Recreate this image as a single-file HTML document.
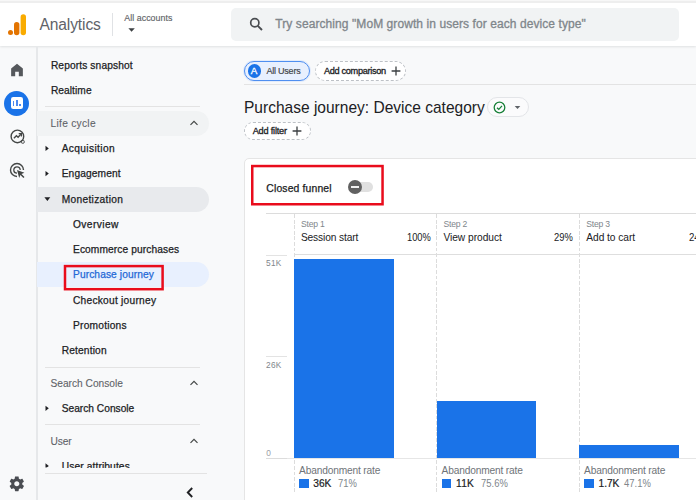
<!DOCTYPE html>
<html lang="en">
<head>
<meta charset="utf-8">
<title>Analytics</title>
<style>
*{box-sizing:border-box;margin:0;padding:0}
html,body{width:696px;height:500px;overflow:hidden;background:#f8f9fa;font-family:"Liberation Sans",sans-serif;color:#202124}
.abs{position:absolute}
.t{position:absolute;white-space:nowrap;line-height:1;transform:translateY(-50%)}
#hdr{left:0;top:0;width:696px;height:46px;background:linear-gradient(#f7f7f7 0,#f7f7f7 1px,#eeeeee 1px,#eeeeee 2.6px,#fff 2.6px);box-shadow:0 1px 2px rgba(60,64,67,.12)}
.nav{font-size:10.5px;color:#202124;-webkit-text-stroke:.25px #202124}
.sec{font-size:10.5px;color:#5f6368}
.hr{position:absolute;height:1px;background:#e3e3e3}
.tri-r{position:absolute;width:3.300px;height:5.300px;background:#202124;clip-path:polygon(0 0,100% 50%,0 100%);margin-top:-.5px}
.tri-d{position:absolute;width:5.600px;height:3.400px;background:#202124;clip-path:polygon(0 0,100% 0,50% 100%)}
.vd{position:absolute;width:1.2px;background:repeating-linear-gradient(to bottom,#dcdcdc 0,#dcdcdc 3.900px,transparent 3.900px,transparent 5.600px)}
.bar{position:absolute;background:#1a73e8}
.g{color:#80868b}
</style>
</head>
<body>
<!-- header -->
<div id="hdr" class="abs"></div>
<svg class="abs" style="left:6px;top:12px" width="24" height="26" viewBox="0 0 24 26">
  <rect x="14.6" y="2.2" width="5.4" height="21" rx="2.7" fill="#f9ab00"/>
  <rect x="8" y="10" width="5.4" height="13.2" rx="2.7" fill="#e37400"/>
  <circle cx="4.5" cy="20.6" r="2.5" fill="#e37400"/>
</svg>
<div class="t" style="left:39.38px;top:25.4px;font-size:15.6px;letter-spacing:-0.107px;color:#5f6368">Analytics</div>
<div class="abs" style="left:112px;top:13px;width:1px;height:23px;background:#e0e2e5"></div>
<div class="t" style="left:124.35px;top:18px;font-size:8.8px;letter-spacing:0.051px;color:#5f6368;-webkit-text-stroke:.15px #5f6368">All accounts</div>
<div class="abs" style="left:231px;top:7.900px;width:448px;height:33.300px;background:#f1f3f4;border-radius:5px"></div>
<svg class="abs" style="left:248px;top:16px" width="16" height="16" viewBox="0 0 16 16"><circle cx="6.8" cy="6.8" r="4.1" fill="none" stroke="#4a4d51" stroke-width="1.7"/><path d="M9.8 9.8L14 14" stroke="#4a4d51" stroke-width="1.9" stroke-linecap="butt"/></svg>
<div class="t" style="left:275.32px;top:24.3px;font-size:12px;letter-spacing:0.077px;color:#80868b;-webkit-text-stroke:.3px #80868b">Try searching &quot;MoM growth in users for each device type&quot;</div>

<!-- rail -->
<div class="abs" style="left:36px;top:47px;width:1.5px;height:453px;background:#e6e8ea"></div>
<svg class="abs" style="left:9px;top:61.6px" width="16" height="16" viewBox="0 0 15 15"><path d="M2 6.2L7.5 1.6L13 6.2V13.4H9.2V9.2H5.8V13.4H2Z" fill="#55585c"/></svg>
<div class="abs" style="left:4px;top:90.7px;width:25.2px;height:25.2px;border-radius:50%;background:#1a73e8"></div>
<div class="abs" style="left:10.6px;top:96.9px;width:12.8px;height:12.3px;border-radius:2.2px;background:#fff"></div>
<div class="abs" style="left:13.1px;top:101.2px;width:1.3px;height:5px;background:#4d8af0"></div>
<div class="abs" style="left:16.3px;top:99.6px;width:1.3px;height:6.6px;background:#4d8af0"></div>
<div class="abs" style="left:19.4px;top:103.7px;width:1.3px;height:2.5px;background:#4d8af0"></div>
<svg class="abs" style="left:8.8px;top:128.2px" width="17" height="17" viewBox="0 0 17 17"><circle cx="8.4" cy="8.4" r="6.3" fill="none" stroke="#444746" stroke-width="1.4"/><path d="M4.9 10.3L7.4 7.7L9.1 9.3L11.8 6.3" fill="none" stroke="#444746" stroke-width="1.3"/><path d="M9.7 5.7H12.4V8.4" fill="none" stroke="#444746" stroke-width="1.2"/><rect x="12.4" y="12.4" width="2.8" height="2.8" rx=".8" fill="none" stroke="#444746" stroke-width="1"/></svg>
<svg class="abs" style="left:8.9px;top:161.900px" width="18" height="18" viewBox="0 0 18 18"><path d="M8 14.500A6.500 6.500 0 1 1 14.500 8" fill="none" stroke="#444746" stroke-width="1.4"/><path d="M8 11.200A3.200 3.200 0 1 1 11.200 8" fill="none" stroke="#444746" stroke-width="1.3"/><path d="M8 8L15.400 10.700L12.500 12L15.500 15L14.400 16.100L11.400 13.100L10.200 15.900Z" fill="#444746"/></svg>
<svg class="abs" style="left:8.1px;top:474.9px" width="17.6" height="17.6" viewBox="0 0 24 24"><path fill="#4a4d52" d="M19.43 12.98c.04-.32.07-.64.07-.98s-.03-.66-.07-.98l2.11-1.65c.19-.15.24-.42.12-.64l-2-3.46c-.12-.22-.39-.3-.61-.22l-2.49 1c-.52-.4-1.08-.73-1.69-.98l-.38-2.65C14.46 2.18 14.25 2 14 2h-4c-.25 0-.46.18-.49.42l-.38 2.65c-.61.25-1.17.59-1.69.98l-2.49-1c-.23-.09-.49 0-.61.22l-2 3.46c-.13.22-.07.49.12.64l2.11 1.65c-.04.32-.07.65-.07.98s.03.66.07.98l-2.11 1.65c-.19.15-.24.42-.12.64l2 3.46c.12.22.39.3.61.22l2.49-1c.52.4 1.08.73 1.69.98l.38 2.65c.03.24.24.42.49.42h4c.25 0 .46-.18.49-.42l.38-2.65c.61-.25 1.17-.59 1.69-.98l2.49 1c.23.09.49 0 .61-.22l2-3.46c.12-.22.07-.49-.12-.64l-2.11-1.65zM12 15.5c-1.93 0-3.500-1.570-3.500-3.500s1.570-3.500 3.500-3.500 3.500 1.570 3.500 3.500-1.570 3.500-3.500 3.500z"/></svg>

<!-- nav -->
<div class="t" style="left:50.89px;top:66.4px;font-size:10.2px;letter-spacing:0.124px;color:#202124;-webkit-text-stroke:.25px #202124">Reports snapshot</div>
<div class="t" style="left:50.89px;top:91.4px;font-size:10.2px;letter-spacing:0.073px;color:#202124;-webkit-text-stroke:.25px #202124">Realtime</div>
<div class="hr" style="left:45px;top:106px;width:155px"></div>
<div class="abs" style="left:37px;top:111px;width:172px;height:25px;background:#f1f3f4;border-radius:0 12.5px 12.5px 0"></div>
<div class="t" style="left:50.49px;top:124.1px;font-size:10.2px;letter-spacing:0.294px;color:#5f6368;-webkit-text-stroke:.1px #5f6368">Life cycle</div>
<svg class="abs" style="left:189px;top:119px" width="10" height="8" viewBox="0 0 10 8"><path d="M1.5 5.8L5 2.3L8.500 5.8" fill="none" stroke="#444746" stroke-width="1.2"/></svg>
<div class="t" style="left:61.69px;top:149.2px;font-size:10.2px;letter-spacing:0.363px;color:#202124;-webkit-text-stroke:.25px #202124">Acquisition</div>
<div class="t" style="left:61.69px;top:174.4px;font-size:10.2px;letter-spacing:0.126px;color:#202124;-webkit-text-stroke:.25px #202124">Engagement</div>
<div class="abs" style="left:37px;top:186.500px;width:172px;height:25px;background:#e8eaed;border-radius:0 12.5px 12.5px 0"></div>
<div class="t" style="left:61.69px;top:199.6px;font-size:10.2px;letter-spacing:0.323px;color:#202124;-webkit-text-stroke:.25px #202124">Monetization</div>
<div class="t" style="left:72.99px;top:224.8px;font-size:10.2px;letter-spacing:0.421px;color:#202124;-webkit-text-stroke:.25px #202124">Overview</div>
<div class="t" style="left:72.99px;top:250.1px;font-size:10.2px;letter-spacing:0.107px;color:#202124;-webkit-text-stroke:.25px #202124">Ecommerce purchases</div>
<div class="abs" style="left:37px;top:262px;width:172px;height:25px;background:#e8f0fe;border-radius:0 12.5px 12.5px 0"></div>
<div class="t" style="left:72.99px;top:275.3px;font-size:10.2px;letter-spacing:0.108px;color:#202124;-webkit-text-stroke:.25px #202124;color:#2468d6;-webkit-text-stroke-color:#2468d6">Purchase journey</div>
<svg class="abs" style="left:60px;top:260px" width="110" height="36" viewBox="60 260 110 36"><rect x="65" y="266.100" width="97.600" height="23.100" fill="none" stroke="#e90c1c" stroke-width="2.500"/></svg>
<div class="t" style="left:72.99px;top:300.6px;font-size:10.2px;letter-spacing:0.248px;color:#202124;-webkit-text-stroke:.25px #202124">Checkout journey</div>
<div class="t" style="left:72.99px;top:325.6px;font-size:10.2px;letter-spacing:0.232px;color:#202124;-webkit-text-stroke:.25px #202124">Promotions</div>
<div class="t" style="left:61.69px;top:351.0px;font-size:10.2px;letter-spacing:0.161px;color:#202124;-webkit-text-stroke:.25px #202124">Retention</div>
<div class="hr" style="left:45px;top:366.5px;width:155px"></div>
<div class="t" style="left:50.49px;top:384.0px;font-size:10.2px;letter-spacing:-0.006px;color:#5f6368;-webkit-text-stroke:.1px #5f6368">Search Console</div>
<svg class="abs" style="left:189px;top:379px" width="10" height="8" viewBox="0 0 10 8"><path d="M1.5 5.8L5 2.3L8.500 5.8" fill="none" stroke="#444746" stroke-width="1.2"/></svg>
<div class="t" style="left:61.69px;top:409.2px;font-size:10.2px;letter-spacing:0.009px;color:#202124;-webkit-text-stroke:.25px #202124">Search Console</div>
<div class="hr" style="left:45px;top:424.2px;width:155px"></div>
<div class="t" style="left:50.49px;top:441.6px;font-size:10.2px;letter-spacing:-0.133px;color:#5f6368;-webkit-text-stroke:.1px #5f6368">User</div>
<svg class="abs" style="left:189px;top:437px" width="10" height="8" viewBox="0 0 10 8"><path d="M1.5 5.8L5 2.3L8.500 5.8" fill="none" stroke="#444746" stroke-width="1.2"/></svg>
<div class="abs" style="left:37px;top:455px;width:172px;height:12.5px;overflow:hidden">
  <div class="t nav" style="left:24.7px;top:11.9px;font-size:10.2px;letter-spacing:.13px">User attributes</div>
</div>
<div class="hr" style="left:45px;top:473px;width:161.500px"></div>
<svg class="abs" style="left:185px;top:485.7px" width="10" height="13" viewBox="0 0 10 13"><path d="M7.200 2L2.800 6.500L7.200 11" fill="none" stroke="#202124" stroke-width="1.900"/></svg>

<!-- main top -->
<div class="abs" style="left:244px;top:60.500px;width:65.500px;height:20px;border:1px solid #4f8ff0;background:#e8f0fe;border-radius:10px;box-shadow:0 0 0 1px #e3ecfb"></div>
<div class="abs" style="left:248px;top:64.4px;width:13.2px;height:13.2px;border-radius:50%;background:#1a73e8"></div>
<div class="t" style="left:250.71px;top:70.9px;font-size:9.8px;letter-spacing:0.000px;color:#fff;-webkit-text-stroke:.3px #fff">A</div>
<div class="t" style="left:266.44px;top:71px;font-size:9px;letter-spacing:-0.224px;color:#3c4043;-webkit-text-stroke:.15px #3c4043">All Users</div>
<div class="abs" style="left:315px;top:61px;width:91px;height:19.500px;border:1px dashed #bdc1c6;border-radius:10px;background:#fff"></div>
<div class="t" style="left:323.93px;top:71.7px;font-size:9.2px;letter-spacing:-0.320px;color:#202124;-webkit-text-stroke:.3px #202124">Add comparison</div>
<svg class="abs" style="left:390.6px;top:65.5px" width="10" height="10" viewBox="0 0 10 10"><path d="M5 .6V9.4M.6 5H9.4" stroke="#3c4043" stroke-width="1.3"/></svg>
<div class="hr" style="left:244px;top:84px;width:452px"></div>
<div class="t" style="left:243.85px;top:107.2px;font-size:16.2px;transform-origin:0 50%;transform:translateY(-50%) scaleX(0.959);color:#202124;">Purchase journey: Device category</div>
<div class="abs" style="left:487px;top:97px;width:41.5px;height:20px;border:1px solid #e3e5e8;border-radius:10px;background:#fbfbfc"></div>
<svg class="abs" style="left:493px;top:101px" width="13" height="13" viewBox="0 0 13 13"><circle cx="6.500" cy="6.500" r="5.3" fill="none" stroke="#188038" stroke-width="1.300"/><path d="M4 6.700L5.800 8.400L9 4.900" fill="none" stroke="#188038" stroke-width="1.300"/></svg>
<div class="abs" style="left:244px;top:121.500px;width:67px;height:18px;border:1px dashed #bdc1c6;border-radius:9px;background:#fff"></div>
<div class="t" style="left:252.63px;top:131.8px;font-size:9.2px;letter-spacing:-0.203px;color:#202124;-webkit-text-stroke:.3px #202124">Add filter</div>
<svg class="abs" style="left:292px;top:126px" width="10" height="10" viewBox="0 0 10 10"><path d="M5 .6V9.4M.6 5H9.4" stroke="#3c4043" stroke-width="1.3"/></svg>

<!-- card -->
<div class="abs" style="left:244px;top:158px;width:470px;height:360px;background:#fff;border:1px solid #e5e5e5;border-radius:5px"></div>
<svg class="abs" style="left:248px;top:160px" width="140" height="50" viewBox="248 160 140 50"><rect x="252.250" y="166.050" width="130.300" height="38.200" fill="none" stroke="#e90c1c" stroke-width="2.500"/></svg>
<div class="t" style="left:266.28px;top:188.8px;font-size:10.4px;letter-spacing:0.149px;color:#202124;-webkit-text-stroke:.25px #202124">Closed funnel</div>
<div class="abs" style="left:353px;top:182.300px;width:20.300px;height:9.500px;border-radius:5px;background:#e0e0e0"></div>
<div class="abs" style="left:347.8px;top:179.6px;width:14.3px;height:14.3px;border-radius:50%;background:#616161"></div>
<div class="abs" style="left:351px;top:185.900px;width:8.200px;height:1.700px;background:#f2f2f2"></div>
<div class="hr" style="left:266px;top:212.6px;width:430px;background:#dcdcdc"></div>
<div class="vd" style="left:293.600px;top:214px;height:279.5px"></div>
<div class="vd" style="left:436.200px;top:214px;height:279.5px"></div>
<div class="vd" style="left:579px;top:214px;height:279.5px"></div>
<div class="t" style="left:300.96px;top:223.9px;font-size:8.6px;letter-spacing:-0.214px;color:#80868b">Step 1</div>
<div class="t" style="left:300.89px;top:238px;font-size:10.2px;letter-spacing:-0.115px;">Session start</div>
<div class="t" style="left:406.59px;top:238px;font-size:10.2px;transform-origin:0 50%;transform:translateY(-50%) scaleX(0.914);">100%</div>
<div class="t" style="left:443.46px;top:223.9px;font-size:8.6px;letter-spacing:-0.194px;color:#80868b">Step 2</div>
<div class="t" style="left:443.39px;top:238px;font-size:10.2px;letter-spacing:-0.018px;">View product</div>
<div class="t" style="left:554.09px;top:238px;font-size:10.2px;transform-origin:0 50%;transform:translateY(-50%) scaleX(0.923);">29%</div>
<div class="t" style="left:586.16px;top:223.9px;font-size:8.6px;letter-spacing:-0.194px;color:#80868b">Step 3</div>
<div class="t" style="left:586.29px;top:238px;font-size:10.2px;letter-spacing:-0.047px;">Add to cart</div>
<div class="t" style="left:688.59px;top:238px;font-size:10.2px;transform-origin:0 50%;transform:translateY(-50%) scaleX(0.947);">24%</div>
<div class="hr" style="left:294px;top:254.400px;width:402px;height:1px;background:#dedede"></div>
<div class="hr" style="left:266px;top:254.700px;width:21px;height:1.200px"></div>
<div class="hr" style="left:266px;top:356.300px;width:21px;height:1.200px"></div>
<div class="hr" style="left:266px;top:458px;width:430px;background:#e6e6e6"></div><div class="hr" style="left:266px;top:458px;width:21px;background:#dcdcdc"></div>
<div class="t" style="left:265.97px;top:263.4px;font-size:8.3px;letter-spacing:0.299px;color:#80868b">51K</div>
<div class="t" style="left:265.97px;top:364.7px;font-size:8.3px;letter-spacing:0.299px;color:#80868b">26K</div>
<div class="t" style="left:266.17px;top:453px;font-size:8.3px;letter-spacing:0.000px;color:#9aa0a6">0</div>
<div class="bar" style="left:294.3px;top:259px;width:99.700px;height:199px"></div>
<div class="bar" style="left:436.8px;top:401px;width:99.600px;height:57px"></div>
<div class="bar" style="left:579.4px;top:444.700px;width:99.800px;height:13.300px"></div>

<div class="t" style="left:299.09px;top:470.5px;font-size:10.2px;letter-spacing:-0.167px;color:#6f7479">Abandonment rate</div>
<div class="bar" style="left:299.500px;top:478.6px;width:9.500px;height:9.500px;margin-left:-.3px"></div>
<div class="t" style="left:313.29px;top:484px;font-size:10.2px;letter-spacing:-0.012px;color:#202124;-webkit-text-stroke:.2px #202124">36K</div>
<div class="t" style="left:338.29px;top:484px;font-size:10.2px;transform-origin:0 50%;transform:translateY(-50%) scaleX(0.928);color:#80868b;">71%</div>

<div class="t" style="left:441.59px;top:470.5px;font-size:10.2px;letter-spacing:-0.167px;color:#6f7479">Abandonment rate</div>
<div class="bar" style="left:442px;top:478.6px;width:9.500px;height:9.500px;margin-left:-.3px"></div>
<div class="t" style="left:456.09px;top:484px;font-size:10.2px;letter-spacing:0.220px;color:#202124;-webkit-text-stroke:.2px #202124">11K</div>
<div class="t" style="left:480.59px;top:484px;font-size:10.2px;transform-origin:0 50%;transform:translateY(-50%) scaleX(0.928);color:#80868b;">75.6%</div>

<div class="t" style="left:584.09px;top:470.5px;font-size:10.2px;letter-spacing:-0.167px;color:#6f7479">Abandonment rate</div>
<div class="bar" style="left:584.500px;top:478.6px;width:9.500px;height:9.500px;margin-left:-.3px"></div>
<div class="t" style="left:598.59px;top:484px;font-size:10.2px;letter-spacing:-0.051px;color:#202124;-webkit-text-stroke:.2px #202124">1.7K</div>
<div class="t" style="left:623.59px;top:484px;font-size:10.2px;transform-origin:0 50%;transform:translateY(-50%) scaleX(0.928);color:#80868b;">47.1%</div>
<svg class="abs" style="left:0;top:0;pointer-events:none" width="696" height="500" viewBox="0 0 696 500"><defs><clipPath id="uc"><rect x="37" y="455" width="172" height="12.500"/></clipPath></defs><polygon points="45.50,145.75 48.80,148.40 45.50,151.05" fill="#202124"/><polygon points="45.50,170.95 48.80,173.60 45.50,176.25" fill="#202124"/><polygon points="45.50,405.65 48.80,408.30 45.50,410.95" fill="#202124"/><polygon points="45.50,463.25 48.80,465.90 45.50,468.55" fill="#202124" clip-path="url(#uc)"/><polygon points="44.40,197.30 50.30,197.30 47.35,200.90" fill="#202124"/><polygon points="128.40,28.20 134.80,28.20 131.60,31.70" fill="#3c4043"/><polygon points="514.70,106.10 520.30,106.10 517.50,109.00" fill="#5f6368"/></svg>
</body>
</html>
